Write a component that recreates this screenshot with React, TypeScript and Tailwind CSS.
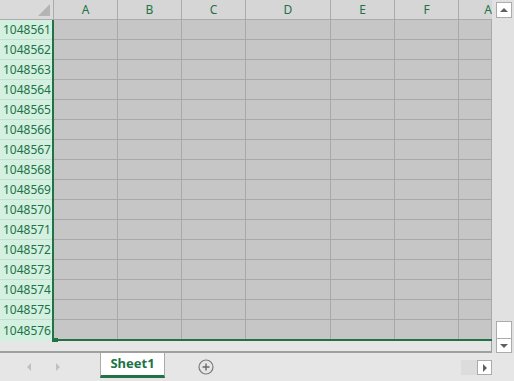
import React from "react";

const cols = [
  { l: "A", w: "w-[64px]" },
  { l: "B", w: "w-[64px]" },
  { l: "C", w: "w-[64px]" },
  { l: "D", w: "w-[85px]" },
  { l: "E", w: "w-[64px]" },
  { l: "F", w: "w-[64px]" },
];

const rows = Array.from({ length: 16 }, (_, i) => 1048561 + i);

export default function App() {
  return (
    <div
      className="w-[514px] h-[381px] bg-[#e6e6e6] overflow-hidden flex flex-col"
      style={{ fontFamily: '"Noto Sans", "Liberation Sans", sans-serif' }}
    >
      <div className="flex h-[353px]">
        <div className="w-[492px] flex flex-col">
          {/* header */}
          <div className="flex h-[20px] bg-[#d6d6d6]">
            <div className="w-[54px] h-[20px] border-r border-b border-[#ababab] relative bg-[#dadada]">
              <div className="absolute right-[3px] bottom-[3px] w-0 h-0 border-l-[12px] border-l-transparent border-b-[12px] border-b-[#b4b4b4]" />
            </div>
            {cols.map((c) => (
              <div
                key={c.l}
                className={`${c.w} h-[20px] border-r border-b border-[#ababab] flex items-center justify-center text-[12px] text-[#217346]`}
              >
                {c.l}
              </div>
            ))}
            <div className="flex-1 h-[20px] border-b border-[#ababab] flex items-center justify-end text-[12px] text-[#217346]">
              A
            </div>
          </div>
          {/* body */}
          <div className="flex h-[321px]">
            <div className="w-[52px] flex flex-col bg-[#d3f0e0]">
              {rows.map((r, i) => (
                <div
                  key={r}
                  className={`${i === 15 ? "h-[21px]" : "h-[20px] border-b border-[#bfe0cb]"} flex items-center justify-end pr-[1px] text-[12px] text-[#217346]`}
                >
                  {r}
                </div>
              ))}
            </div>
            <div className="w-[2px] bg-[#217346] relative">
              <div className="absolute left-0 bottom-[-1px] w-[6px] h-[4px] bg-[#217346]" />
            </div>
            <div className="w-[438px] flex flex-col bg-[#c6c6c6]">
              {rows.map((r, i) => (
                <div
                  key={r}
                  className={`flex ${i === 15 ? "h-[19px]" : "h-[20px] border-b border-[#a8a8a8]"}`}
                >
                  {cols.map((c) => (
                    <div key={c.l} className={`${c.w} h-full border-r border-[#a8a8a8]`} />
                  ))}
                  <div className="flex-1 h-full border-r border-[#a8a8a8]" />
                </div>
              ))}
              <div className="h-[2px] bg-[#217346]" />
            </div>
          </div>
          {/* strip */}
          <div className="h-[12px] flex">
            <div className="w-[54px] border-b-2 border-[#a0a0a0]" />
            <div className="flex-1 border-b-2 border-r border-[#a0a0a0]" />
          </div>
        </div>
        {/* vertical scrollbar */}
        <div className="w-[22px] bg-[#e1e1e1] flex flex-col items-center pt-[2px]">
          <div className="w-[16px] h-[16px] ml-[2px] bg-white border border-[#ababab] flex items-center justify-center">
            <div className="w-0 h-0 border-l-[4px] border-l-transparent border-r-[4px] border-r-transparent border-b-[4px] border-b-[#606060]" />
          </div>
          <div className="flex-1" />
          <div className="w-[16px] h-[18px] ml-[2px] bg-white border border-[#ababab]" />
          <div className="w-[16px] h-[14px] ml-[2px] bg-white border border-[#ababab] border-t-0 flex items-center justify-center">
            <div className="w-0 h-0 border-l-[4px] border-l-transparent border-r-[4px] border-r-transparent border-t-[4px] border-t-[#606060]" />
          </div>
        </div>
      </div>
      {/* tab bar */}
      <div className="h-[28px] flex items-start">
        <div className="w-[100px] h-[28px] flex items-center">
          <div className="ml-[27px] w-0 h-0 border-t-[4px] border-t-transparent border-b-[4px] border-b-transparent border-r-[4px] border-r-[#c0c0c0]" />
          <div className="ml-[25px] w-0 h-0 border-t-[4px] border-t-transparent border-b-[4px] border-b-transparent border-l-[4px] border-l-[#c0c0c0]" />
        </div>
        <div className="w-[65px] h-[25px] bg-white border-l border-r border-[#ababab] border-b-[3px] border-b-[#217346] flex items-center justify-center text-[13px] font-bold text-[#217346]">
          Sheet1
        </div>
        <div className="ml-[33px] mt-[6px] w-[16px] h-[16px] flex items-center justify-center">
          <svg width="16" height="16" viewBox="0 0 16 16">
            <circle cx="8" cy="8" r="7" fill="none" stroke="#7a7a7a" strokeWidth="1.2" />
            <path d="M8 4.5v7M4.5 8h7" stroke="#6a6a6a" strokeWidth="1.4" />
          </svg>
        </div>
        <div className="flex-1" />
        <div className="mt-[7px] w-[16px] h-[15px] bg-[#dcdcdc]" />
        <div className="mt-[7px] w-[15px] h-[15px] bg-white border border-[#ababab] flex items-center justify-center">
          <div className="w-0 h-0 border-t-[4px] border-t-transparent border-b-[4px] border-b-transparent border-l-[4px] border-l-[#606060]" />
        </div>
        <div className="w-[22px]" />
      </div>
    </div>
  );
}
